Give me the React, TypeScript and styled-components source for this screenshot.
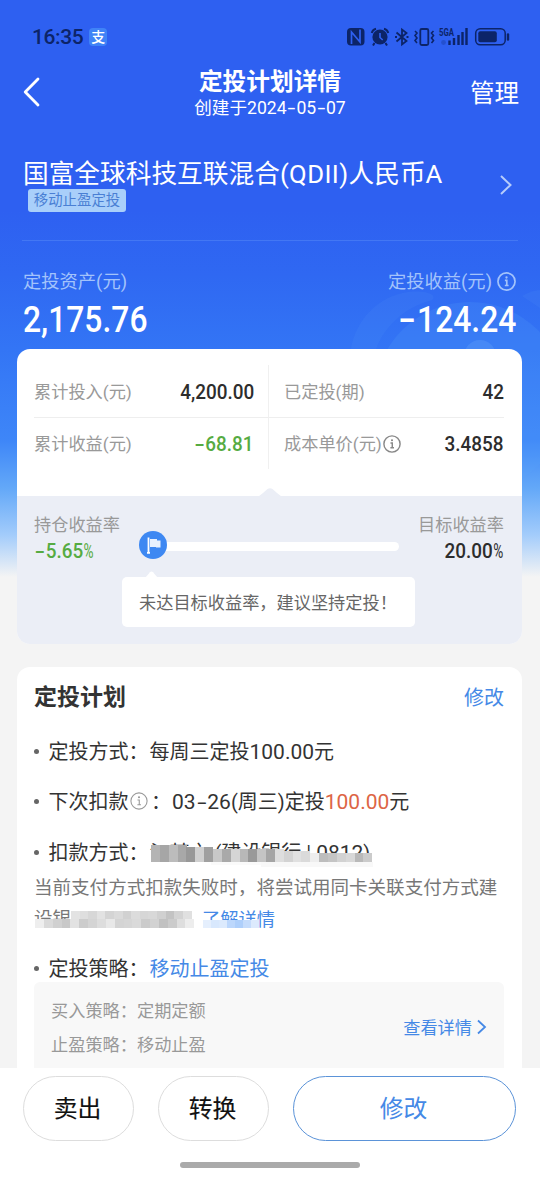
import React from "react";
import styled, { createGlobalStyle } from "styled-components";

const Global = createGlobalStyle`
  * { box-sizing: border-box; }
  body { margin: 0; background: #f4f4f4; }
`;

const Page = styled.div`
  position: relative;
  z-index: 0;
  width: 540px;
  height: 1181px;
  display: flex;
  flex-direction: column;
  overflow: hidden;
  font-family: Roboto, "Noto Sans CJK SC", "Noto Sans", sans-serif;
  color: #333;
  background: linear-gradient(
    180deg,
    #2e60f1 0px,
    #2e60f1 210px,
    #2f68f2 275px,
    #3375f5 350px,
    #3e86f8 440px,
    #63a8f8 488px,
    #a3ccfb 535px,
    #f4f4f4 577px
  );
`;

const Backdrop = styled.svg`
  position: absolute;
  z-index: -1;
  left: 340px;
  top: 280px;
`;

const StatusBar = styled.div`
  height: 60px;
  padding: 14px 30px 0 32px;
  display: flex;
  align-items: center;
  color: #0c2468;
`;

const Clock = styled.span`
  font-size: 21px;
  font-weight: 500;
  line-height: 24px;
  letter-spacing: -0.4px;
  margin-right: 6px;
`;

const PayBadge = styled.span`
  width: 18px;
  height: 18px;
  border-radius: 4px;
  background: #3f83f7;
  color: #fff;
  font-size: 14px;
  font-weight: 500;
  line-height: 18px;
  text-align: center;
`;

const StatusIcons = styled.svg`
  margin-left: auto;
`;

const NavBar = styled.div`
  height: 84px;
  padding: 0 21px 0 23px;
  display: grid;
  grid-template-columns: 60px 1fr 60px;
`;

const BackIcon = styled.svg`
  margin-top: 17px;
`;

const TitleBlock = styled.div`
  padding-top: 7px;
  display: flex;
  flex-direction: column;
  align-items: center;
  color: #fff;
  white-space: nowrap;
`;

const Title = styled.h1`
  margin: 0 2px 0 0;
  font-size: 23.7px;
  line-height: 30px;
  font-weight: 700;
`;

const Created = styled.div`
  margin-right: 2px;
  font-size: 17.6px;
  line-height: 23px;
`;

const Dash = styled.span`
  display: inline-block;
  margin: 0 0.14em;
  transform: scaleX(1.6);
`;

const Manage = styled.div`
  padding-top: 16px;
  font-size: 24.5px;
  line-height: 36px;
  color: #fff;
  text-align: right;
  white-space: nowrap;
`;

const Fund = styled.div`
  height: 97px;
  margin: 0 22px;
  padding: 15px 6px 0 1px;
  display: flex;
  justify-content: space-between;
  border-bottom: 1px solid #4377f4;
`;

const FundName = styled.div`
  font-size: 25.7px;
  line-height: 30px;
  color: #fff;
  white-space: nowrap;
  span { letter-spacing: 0.4px; }
`;

const Tag = styled.div`
  width: 98px;
  height: 23px;
  margin: 0 0 0 5px;
  border-radius: 3px;
  background: #a9cffa;
  color: #4a7fd4;
  font-size: 14.4px;
  line-height: 24px;
  text-align: center;
`;

const FundArrow = styled.svg`
  margin-top: 16px;
`;

const Totals = styled.div`
  height: 108px;
  padding: 28px 24px 0 23px;
  display: flex;
  justify-content: space-between;
`;

const Total = styled.div<{ $end?: boolean }>`
  display: flex;
  flex-direction: column;
  align-items: ${(p) => (p.$end ? "flex-end" : "flex-start")};
`;

const TotalLabel = styled.div`
  display: flex;
  align-items: center;
  gap: 5px;
  font-size: 18.3px;
  line-height: 26px;
  color: #a3c3fb;
  svg { margin-top: -2px; }
`;

const TotalValue = styled.div<{ $end?: boolean }>`
  font-size: 37px;
  font-weight: 500;
  line-height: 50px;
  color: #fff;
  transform: scaleX(0.86);
  transform-origin: ${(p) => (p.$end ? "right" : "left")} center;
`;

const SummaryCard = styled.section`
  position: relative;
  height: 295px;
  flex: none;
  margin: 0 18px 0 17px;
  border-radius: 13px;
  overflow: hidden;
  background: #fff;
`;

const Stats = styled.div`
  height: 147px;
  padding: 16px 18px 27px 17px;
  display: grid;
  grid-template-columns: 234px 1fr;
  grid-template-rows: 53px 51px;
`;

const Stat = styled.div<{ $right?: boolean; $top?: boolean }>`
  padding: ${(p) => (p.$right ? "0 0 0 15px" : "0 14px 0 0")};
  padding-top: ${(p) => (p.$top ? 1 : 0)}px;
  border-left: ${(p) => (p.$right ? "1px solid #f0f0f0" : "none")};
  border-bottom: ${(p) => (p.$top ? "1px solid #eee" : "none")};
  display: flex;
  align-items: center;
  justify-content: space-between;
`;

const Label = styled.span`
  display: flex;
  align-items: center;
  gap: 1px;
  font-size: 17.2px;
  line-height: 24px;
  color: #999;
  white-space: nowrap;
`;

const Value = styled.span<{ $green?: boolean; $start?: boolean }>`
  font-size: 21px;
  line-height: 24px;
  font-weight: 500;
  color: ${(p) => (p.$green ? "#56ab42" : "#2d2d2d")};
  transform: scaleX(0.9);
  transform-origin: ${(p) => (p.$start ? "left" : "right")} center;
`;

const Target = styled.div`
  height: 148px;
  background: #ebeef6;
`;

const Notch = styled.svg`
  position: absolute;
  left: 239px;
  top: 139px;
`;

const Rates = styled.div`
  height: 81px;
  padding: 17px 18px 0 17px;
  display: flex;
  justify-content: space-between;
`;

const Rate = styled.div<{ $end?: boolean }>`
  width: 87px;
  display: flex;
  flex-direction: column;
  align-items: ${(p) => (p.$end ? "flex-end" : "flex-start")};
  gap: 2px;
`;

const Percent = styled.small`
  display: inline-block;
  width: 12px;
  font-size: 20px;
  font-weight: 400;
  transform: scaleX(0.76);
  transform-origin: left center;
`;

const Track = styled.div`
  position: relative;
  flex: none;
  width: 260px;
  height: 9px;
  margin: 29px 19px 0 18px;
  border-radius: 5px;
  background: #fff;
`;

const Flag = styled.svg`
  position: absolute;
  left: 0;
  top: -11px;
`;

const Tip = styled.div`
  position: relative;
  width: 293px;
  height: 50px;
  margin-left: 105px;
  padding-left: 17px;
  border-radius: 5px;
  background: #fff;
  color: #666;
  font-size: 17.2px;
  line-height: 52px;
  white-space: nowrap;
  svg { position: absolute; left: 23px; top: -6px; }
`;

const PlanCard = styled.section`
  flex: 1;
  min-height: 0;
  margin: 23px 18px 0 17px;
  padding: 15px 18px 0 17px;
  border-radius: 13px 13px 0 0;
  overflow: hidden;
  background: #fff;
`;

const PlanHead = styled.div`
  height: 31px;
  display: flex;
  justify-content: space-between;
  line-height: 32px;
`;

const Heading = styled.h2`
  margin: 0;
  font-size: 23px;
  font-weight: 700;
`;

const Link = styled.span<{ $size: number }>`
  font-size: ${(p) => p.$size}px;
  color: #4589e6;
`;

const Item = styled.div<{ $gap: number }>`
  position: relative;
  height: 30px;
  margin-top: ${(p) => p.$gap}px;
  display: flex;
  align-items: center;
  font-size: 20px;
  line-height: 30px;
  white-space: nowrap;
  &::before {
    content: "";
    width: 5px;
    height: 5px;
    border-radius: 50%;
    background: #666;
    margin-right: 9.5px;
  }
`;

const ItemLabel = styled.span`
  display: flex;
  align-items: center;
  height: 30px;
  padding-top: 2px;
  svg { margin: -2px 3px 0 1.5px; }
`;

const ItemValue = styled.span`
  padding: 2px 0 0 1px;
`;

const Digits = styled.span`
  font-size: 21px;
`;

const Amount = styled(Digits)`
  color: #dd6545;
`;

const Note = styled.div`
  position: relative;
  margin: 6px 0 0;
  font-size: 18.55px;
  line-height: 31px;
  color: #777;
  white-space: nowrap;
`;

const NoteLine = styled.div`
  display: flex;
`;

const Masked = styled.span`
  width: 168px;
`;

const Mosaic = styled.svg<{ $x: number; $y: number }>`
  position: absolute;
  left: ${(p) => p.$x}px;
  top: ${(p) => p.$y}px;
`;

const Strategy = styled.div`
  height: 100px;
  margin-top: -1px;
  padding: 12px 17px 0 17px;
  border-radius: 6px;
  background: #f8f8f8;
  display: flex;
  justify-content: space-between;
  font-size: 17.2px;
  line-height: 34px;
  color: #999;
`;

const Detail = styled.div`
  padding-top: 16px;
  display: flex;
  gap: 5px;
  height: 51px;
  align-items: center;
  svg { margin-top: -2px; }
`;

const Footer = styled.footer`
  flex: none;
  height: 113px;
  padding: 8px 24px 0 23px;
  background: #fff;
`;

const Buttons = styled.div`
  display: grid;
  grid-template-columns: 111px 111px 1fr;
  gap: 24px;
`;

const Button = styled.button<{ $primary?: boolean }>`
  height: 65px;
  padding: 0 2px 5px 0;
  border-radius: 33px;
  border: 1px solid ${(p) => (p.$primary ? "#5b93d8" : "#ddd")};
  background: #fff;
  color: ${(p) => (p.$primary ? "#4589e6" : "#111")};
  font-family: inherit;
  font-size: 23.8px;
  font-weight: 400;
  -webkit-text-stroke: ${(p) => (p.$primary ? 0 : 0.15)}px;
`;

const HomeIndicator = styled.div`
  width: 180px;
  height: 6px;
  margin: 21px 0 0 157px;
  border-radius: 3px;
  background: #aaa;
`;

const Info = ({ size, color, width = 1.4 }: { size: number; color: string; width?: number }) => (
  <svg width={size} height={size} viewBox="0 0 20 20" fill="none" stroke={color} strokeWidth={width}>
    <circle cx="10" cy="10" r="9" />
    <path d="M8.3 8.8H10.3V14.6M8.2 14.2H12.2" />
    <circle cx="10" cy="5.8" r="1.2" fill={color} stroke="none" />
  </svg>
);

type Block = [number, number, number, number, string];
const Blocks = ({ x, y, w, h, data }: { x: number; y: number; w: number; h: number; data: Block[] }) => (
  <Mosaic $x={x} $y={y} width={w} height={h} shapeRendering="crispEdges">
    {data.map(([bx, by, bw, bh, c], i) => (
      <rect key={i} x={bx} y={by} width={bw} height={bh} fill={c} />
    ))}
  </Mosaic>
);

const payShades = ["#b4b4b4", "#a6a6a6", "#bcbcbc", "#a8a8a8", "#989898", "#d0d0d0", "#a0a0a0", "#c8c8c8", "#a9a9a9", "#d5d5d5", "#b8b8b8", "#999999", "#c4c4c4", "#a5a5a5", "#dedede", "#d3d3d3", "#e0e0e0", "#dadada", "#eeeeee", "#bdbdbd", "#c4c4c4", "#d2d2d2", "#d8d8d8", "#b9b9b9", "#cbcbcb"];
const payBlocks: Block[] = payShades.map((c, i) => {
  const top = i < 4 ? 0 : i < 7 ? 2 : i < 15 ? 4 : i < 18 ? 6 : 8;
  return [i * 8.85, top, 9, 17 - top, c];
});
const payTrail: Block[] = [[60, 16, 100, 4, "#fafafa"], [110, 17, 112, 5, "#f8f8f8"]];

const topShades = ["#e3e3e3", "#dedede", "#d7d7d7", "#e2e2e2", "#d4d4d4", "#dadada", "#d1d1d1", "#dcdcdc", "#d6d6d6", "#d8d8d8", "#d0d0d0", "#c3c3c3", "#d3d3d3", "#e0e0e0"];
const lowShades = ["#eeeeee", "#dadada", "#d0d0d0", "#c8c8c8", "#e2e2e2", "#cccccc", "#d4d4d4", "#dddddd", "#e8e8e8", "#d4d4d4", "#d6d6d6", "#dadada", "#cbcbcb", "#d2d2d2", "#c1c1c1", "#cbcbcb", "#dedede", "#ededed"];
const noteBlocks: Block[] = [
  ...topShades.map((c, i): Block => [36 + i * 8.6, 0, 9, 9, c]),
  ...lowShades.map((c, i): Block => [i * 8.85, 8, 9, 9, c]),
];
const linkBlocks: Block[] = ["#e5effd", "#d8e8fd", "#dceafd", "#bcd7fc", "#aecffb", "#c5dcfc", "#dceafd"].map((c, i): Block => [i * 8, 0, 8.2, 8, c]);

export default function App() {
  return (
    <Page>
      <Global />
      <Backdrop width="200" height="220">
        <path d="M11 69C16 40 38 16 68 12C90 10 97 16 92 20C62 28 44 48 36 69Z" fill="#5aa0fa" opacity="0.12" />
        <path d="M182 16Q192 10 200 10V28Z" fill="#5aa0fa" opacity="0.12" />
        <circle cx="130" cy="118" r="96" fill="#5aa5fb" opacity="0.18" />
        <circle cx="140" cy="76" r="16" fill="#7ab8fc" opacity="0.22" />
      </Backdrop>

      <StatusBar>
        <Clock>16:35</Clock>
        <PayBadge>支</PayBadge>
        <StatusIcons width="164" height="20" viewBox="346 27 164 20" fill="none" stroke="#0c2468">
          <rect x="347" y="28" width="17.5" height="17.5" rx="4" fill="#0c2468" stroke="none" />
          <path d="M351.5 44V32L360 42V29.5" stroke="#2e60f1" strokeWidth="1.7" />
          <circle cx="380" cy="37" r="7.6" fill="#0c2468" stroke="none" />
          <path d="M371.8 33Q372.5 29.5 376 28.7M384 28.7Q387.5 29.5 388.2 33M374.5 43L373 45.5M385.5 43L387 45.5" strokeWidth="2" />
          <path d="M380 33V37.5L382.7 40" stroke="#2e60f1" strokeWidth="1.6" />
          <path d="M396.5 32.5L406.5 41L402 44.5V29.5L406.5 33L396.5 41.5" strokeWidth="1.8" />
          <path d="M395 37H397M406.5 37H408.5" strokeWidth="2.2" />
          <rect x="420.3" y="29" width="8" height="16" rx="1.5" strokeWidth="1.8" />
          <path d="M415 31L417 33L415 35.5L417 38L415 40.5L417 43M433.5 31L431.5 33L433.5 35.5L431.5 38L433.5 40.5L431.5 43" strokeWidth="1.6" />
          <text x="439" y="36" fontSize="10" fontWeight="700" fontFamily="Roboto" textLength="15" lengthAdjust="spacingAndGlyphs" fill="#0c2468" stroke="none">5GA</text>
          <circle cx="443.5" cy="42.5" r="2.4" fill="#2450cf" stroke="none" />
          <path d="M449.5 45V40.5M454 45V38M458.5 45V35M462.5 45V32M466.5 45V28" strokeWidth="2.4" />
          <rect x="475.7" y="28.7" width="29.5" height="16" rx="4.5" strokeWidth="1.5" />
          <rect x="478.3" y="31.3" width="18.5" height="11" rx="2" fill="#0c2468" stroke="none" />
          <path d="M508 34.5V39.5" strokeWidth="2.4" strokeLinecap="round" />
        </StatusIcons>
      </StatusBar>

      <NavBar>
        <BackIcon width="20" height="30" fill="none" stroke="#fff" strokeWidth="2.8" strokeLinecap="round" strokeLinejoin="round">
          <path d="M15 2L2.2 15L15 28" />
        </BackIcon>
        <TitleBlock>
          <Title>定投计划详情</Title>
          <Created>创建于2024<Dash>-</Dash>05<Dash>-</Dash>07</Created>
        </TitleBlock>
        <Manage>管理</Manage>
      </NavBar>

      <Fund>
        <div>
          <FundName>国富全球科技互联混合<span>(QDII)</span>人民币A</FundName>
          <Tag>移动止盈定投</Tag>
        </div>
        <FundArrow width="12" height="20" fill="none" stroke="#b6ccfb" strokeWidth="2">
          <path d="M1 1L10.5 10L1 19" />
        </FundArrow>
      </Fund>

      <Totals>
        <Total>
          <TotalLabel>定投资产(元)</TotalLabel>
          <TotalValue>2,175.76</TotalValue>
        </Total>
        <Total $end>
          <TotalLabel>定投收益(元)<Info size={19} color="#a3c3fb" width={1.8} /></TotalLabel>
          <TotalValue $end><Dash>-</Dash>124.24</TotalValue>
        </Total>
      </Totals>

      <SummaryCard>
        <Stats>
          <Stat $top><Label>累计投入(元)</Label><Value>4,200.00</Value></Stat>
          <Stat $top $right><Label>已定投(期)</Label><Value>42</Value></Stat>
          <Stat><Label>累计收益(元)</Label><Value $green><Dash>-</Dash>68.81</Value></Stat>
          <Stat $right><Label>成本单价(元)<Info size={18} color="#888" width={1.6} /></Label><Value>3.4858</Value></Stat>
        </Stats>
        <Notch width="28" height="9"><path d="M0 9Q4 8 7 5L11.5 1Q14 -0.5 16.5 1L21 5Q24 8 28 9Z" fill="#ebeef6" /></Notch>
        <Target>
          <Rates>
            <Rate><Label>持仓收益率</Label><Value $green $start><Dash>-</Dash>5.65<Percent>%</Percent></Value></Rate>
            <Track>
              <Flag width="28" height="28">
                <circle cx="14" cy="14" r="14" fill="#3e88f2" />
                <path d="M9.5 6.5V22M8 21.8H11" stroke="#fff" strokeWidth="1.8" />
                <path d="M11 8H18V9.5H21.5V16.5H17V16H11Z" fill="#e8f1fe" />
              </Flag>
            </Track>
            <Rate $end><Label>目标收益率</Label><Value>20.00<Percent>%</Percent></Value></Rate>
          </Rates>
          <Tip>
            <svg width="13" height="7"><path d="M0 7L5 1.2Q6.5 0 8 1.2L13 7Z" fill="#fff" /></svg>
            未达目标收益率，建议坚持定投！
          </Tip>
        </Target>
      </SummaryCard>

      <PlanCard>
        <PlanHead>
          <Heading>定投计划</Heading>
          <Link $size={20}>修改</Link>
        </PlanHead>
        <Item $gap={23}><ItemLabel>定投方式：</ItemLabel><ItemValue>每周三定投<Digits>100.00</Digits>元</ItemValue></Item>
        <Item $gap={20}>
          <ItemLabel>下次扣款<Info size={18} color="#999" width={1.2} />：</ItemLabel>
          <ItemValue><Digits>03<Dash>-</Dash>26</Digits>(周三)定投<Amount>100.00</Amount>元</ItemValue>
        </Item>
        <Item $gap={21}>
          <ItemLabel>扣款方式：</ItemLabel>
          <ItemValue>氵某亠 (建设银行 | <Digits>0812</Digits>)</ItemValue>
          <Blocks x={117} y={8} w={222} h={24} data={[...payTrail, ...payBlocks]} />
        </Item>
        <Note>
          <NoteLine>当前支付方式扣款失败时，将尝试用同卡关联支付方式建</NoteLine>
          <NoteLine><Masked>设银</Masked><Link $size={18.3}>了解详情</Link></NoteLine>
          <Blocks x={1} y={38} w={160} h={18} data={noteBlocks} />
          <Blocks x={169} y={47} w={56} h={9} data={linkBlocks} />
        </Note>
        <Item $gap={18}><ItemLabel>定投策略：</ItemLabel><ItemValue><Link $size={20}>移动止盈定投</Link></ItemValue></Item>
        <Strategy>
          <div>
            <div>买入策略：定期定额</div>
            <div>止盈策略：移动止盈</div>
          </div>
          <Detail>
            <Link $size={17.2}>查看详情</Link>
            <svg width="10" height="16" fill="none" stroke="#4589e6" strokeWidth="1.8"><path d="M1 1.5L8 8L1 14.5" /></svg>
          </Detail>
        </Strategy>
      </PlanCard>

      <Footer>
        <Buttons>
          <Button>卖出</Button>
          <Button>转换</Button>
          <Button $primary>修改</Button>
        </Buttons>
        <HomeIndicator />
      </Footer>
    </Page>
  );
}
